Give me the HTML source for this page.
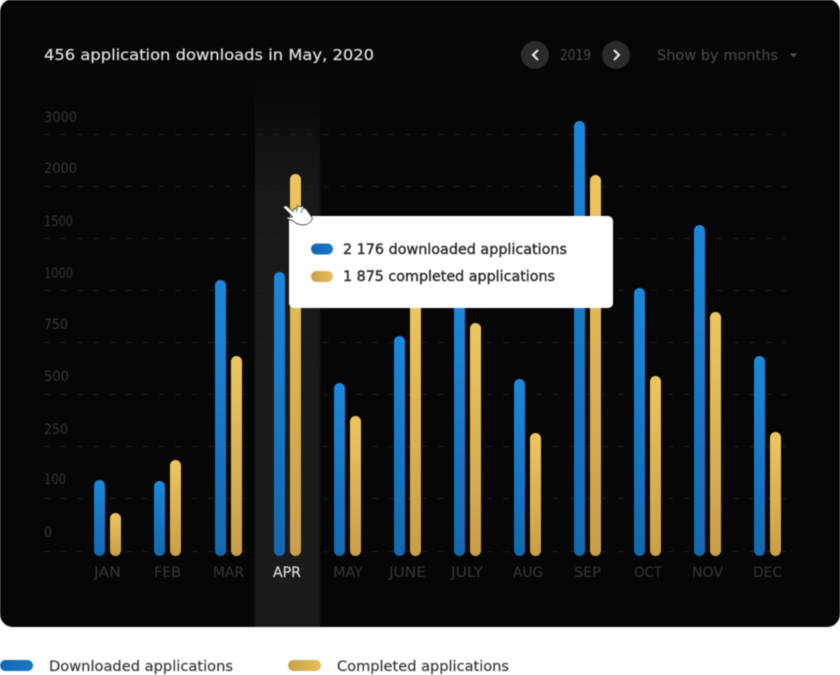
<!DOCTYPE html>
<html><head><meta charset="utf-8"><style>
html,body{margin:0;padding:0;background:#fff;width:840px;height:675px;overflow:hidden}
svg{display:block;filter:blur(.4px)}
text{font-family:"DejaVu Sans","Liberation Sans",sans-serif}
</style></head><body>
<svg width="840" height="675" viewBox="0 0 840 675" xmlns="http://www.w3.org/2000/svg">
<defs>
<linearGradient id="b" x1="0" y1="0" x2="0" y2="1"><stop offset="0" stop-color="#1c88dc"/><stop offset="1" stop-color="#1468b0"/></linearGradient>
<linearGradient id="g" x1="0" y1="0" x2="0" y2="1"><stop offset="0" stop-color="#eec65f"/><stop offset="1" stop-color="#c99f49"/></linearGradient>
<linearGradient id="lb" x1="0" y1="0" x2="1" y2="0"><stop offset="0" stop-color="#1268b2"/><stop offset="1" stop-color="#1878c8"/></linearGradient>
<linearGradient id="lg" x1="0" y1="0" x2="1" y2="0"><stop offset="0" stop-color="#c9a04a"/><stop offset="1" stop-color="#e6bf5e"/></linearGradient>
<linearGradient id="hl" x1="0" y1="0" x2="0" y2="1"><stop offset="0" stop-color="#1a1a1a" stop-opacity="0"/><stop offset=".22" stop-color="#191919"/><stop offset="1" stop-color="#1b1b1b"/></linearGradient>
</defs>
<rect x="0" y="-1" width="840" height="628" rx="13" fill="#060607"/>
<rect x="255" y="75" width="65" height="552" fill="url(#hl)"/>
<g stroke="#1f1f1f" stroke-width="1" stroke-dasharray="6 10.4">
<path d="M44 134.500H786M44 186.500H786M44 238.500H786M44 290.500H786M44 342.500H786M44 394.500H786M44 446.500H786M44 498.500H786M44 551.500H786"/>
</g>
<text x="44" y="60" font-size="15.500" fill="#dedede" stroke="#dedede" stroke-width=".25" textLength="330" lengthAdjust="spacingAndGlyphs">456 application downloads in May, 2020</text>
<circle cx="535" cy="55" r="14" fill="#2b2b2c"/><circle cx="616" cy="55" r="14" fill="#2b2b2c"/>
<path d="M538 50l-5 5 5 5" fill="none" stroke="#e4e4e4" stroke-width="2.200"/>
<path d="M614 50l5 5-5 5" fill="none" stroke="#e4e4e4" stroke-width="2.200"/>
<text x="560" y="60" font-size="15" fill="#4a4a4a" textLength="31" lengthAdjust="spacingAndGlyphs">2019</text>
<text x="657" y="60" font-size="14.500" fill="#454545" stroke="#454545" stroke-width=".15" textLength="121" lengthAdjust="spacingAndGlyphs">Show by months</text>
<path d="M790 53.500h7l-3.500 4z" fill="#555"/>
<g font-size="14.500" fill="#343434">
<text x="44" y="122" textLength="33" lengthAdjust="spacingAndGlyphs">3000</text>
<text x="44" y="173" textLength="33" lengthAdjust="spacingAndGlyphs">2000</text>
<text x="44" y="226" textLength="29" lengthAdjust="spacingAndGlyphs">1500</text>
<text x="44" y="278" textLength="29" lengthAdjust="spacingAndGlyphs">1000</text>
<text x="44" y="329" textLength="24" lengthAdjust="spacingAndGlyphs">750</text>
<text x="44" y="381" textLength="25" lengthAdjust="spacingAndGlyphs">500</text>
<text x="44" y="434" textLength="24" lengthAdjust="spacingAndGlyphs">250</text>
<text x="44" y="484" textLength="22" lengthAdjust="spacingAndGlyphs">100</text>
<text x="44" y="537" textLength="8" lengthAdjust="spacingAndGlyphs">0</text>
</g>
<g fill="url(#b)">
<rect x="94" y="480" width="11" height="76" rx="5.500"/>
<rect x="154" y="481" width="11" height="75" rx="5.500"/>
<rect x="215" y="280" width="11" height="276" rx="5.500"/>
<rect x="274" y="272" width="11" height="284" rx="5.500"/>
<rect x="334" y="383" width="11" height="173" rx="5.500"/>
<rect x="394" y="336" width="11" height="220" rx="5.500"/>
<rect x="454" y="296" width="11" height="260" rx="5.500"/>
<rect x="514" y="379" width="11" height="177" rx="5.500"/>
<rect x="574" y="121" width="11" height="435" rx="5.500"/>
<rect x="634" y="288" width="11" height="268" rx="5.500"/>
<rect x="694" y="225" width="11" height="331" rx="5.500"/>
<rect x="754" y="356" width="11" height="200" rx="5.500"/>
</g>
<g fill="url(#g)">
<rect x="110" y="513" width="11" height="43" rx="5.500"/>
<rect x="170" y="460" width="11" height="96" rx="5.500"/>
<rect x="231" y="356" width="11" height="200" rx="5.500"/>
<rect x="290" y="174" width="11" height="382" rx="5.500"/>
<rect x="350" y="416" width="11" height="140" rx="5.500"/>
<rect x="410" y="296" width="11" height="260" rx="5.500"/>
<rect x="470" y="323" width="11" height="233" rx="5.500"/>
<rect x="530" y="433" width="11" height="123" rx="5.500"/>
<rect x="590" y="175" width="11" height="381" rx="5.500"/>
<rect x="650" y="376" width="11" height="180" rx="5.500"/>
<rect x="710" y="312" width="11" height="244" rx="5.500"/>
<rect x="770" y="432" width="11" height="124" rx="5.500"/>
</g>
<g font-size="14" fill="#363636">
<text x="94" y="577" textLength="27" lengthAdjust="spacingAndGlyphs">JAN</text>
<text x="154" y="577" textLength="27" lengthAdjust="spacingAndGlyphs">FEB</text>
<text x="213" y="577" textLength="31" lengthAdjust="spacingAndGlyphs">MAR</text>
<text x="273" y="577" textLength="28" lengthAdjust="spacingAndGlyphs" fill="#dcdcdc" stroke="#dcdcdc" stroke-width=".2">APR</text>
<text x="333" y="577" textLength="30" lengthAdjust="spacingAndGlyphs">MAY</text>
<text x="389" y="577" textLength="37" lengthAdjust="spacingAndGlyphs">JUNE</text>
<text x="451" y="577" textLength="32" lengthAdjust="spacingAndGlyphs">JULY</text>
<text x="513" y="577" textLength="30" lengthAdjust="spacingAndGlyphs">AUG</text>
<text x="574" y="577" textLength="27" lengthAdjust="spacingAndGlyphs">SEP</text>
<text x="634" y="577" textLength="28" lengthAdjust="spacingAndGlyphs">OCT</text>
<text x="692" y="577" textLength="31" lengthAdjust="spacingAndGlyphs">NOV</text>
<text x="753" y="577" textLength="29" lengthAdjust="spacingAndGlyphs">DEC</text>
</g>
<rect x="289" y="216" width="324" height="92" rx="5" fill="#fff"/>
<rect x="311" y="243.500" width="22" height="11" rx="5.500" fill="url(#lb)"/>
<rect x="311" y="271" width="22" height="11" rx="5.500" fill="url(#lg)"/>
<text x="343" y="254" font-size="14.500" fill="#2c2c2e" stroke="#2c2c2e" stroke-width=".4" textLength="224" lengthAdjust="spacingAndGlyphs">2 176 downloaded applications</text>
<text x="343" y="281" font-size="14.500" fill="#2c2c2e" stroke="#2c2c2e" stroke-width=".4" textLength="212" lengthAdjust="spacingAndGlyphs">1 875 completed applications</text>
<path d="M283 207l3-1.500 7 6 1-3 1.500.5 2-3.500 2.500 1.500 2.500-1 1.500 2 2 1 3 4 3.500 5.500-2 3.500-4 2.500-5 .5-5-1.500-4-3-5-1.500-1-1.500 6-.5-3-3.500z" fill="#fff" stroke="#222" stroke-width=".7" stroke-linejoin="round"/>
<path d="M298 207l-2 5M303 208l-2 5" fill="none" stroke="#333" stroke-width=".7"/>
<rect x="0" y="660" width="33" height="11" rx="5.500" fill="url(#lb)"/>
<rect x="288" y="660" width="33" height="11" rx="5.500" fill="url(#lg)"/>
<text x="49" y="671" font-size="14.500" fill="#3a3a3c" stroke="#3a3a3c" stroke-width=".2" textLength="184" lengthAdjust="spacingAndGlyphs">Downloaded applications</text>
<text x="337" y="671" font-size="14.500" fill="#3a3a3c" stroke="#3a3a3c" stroke-width=".2" textLength="172" lengthAdjust="spacingAndGlyphs">Completed applications</text>
</svg>
</body></html>
